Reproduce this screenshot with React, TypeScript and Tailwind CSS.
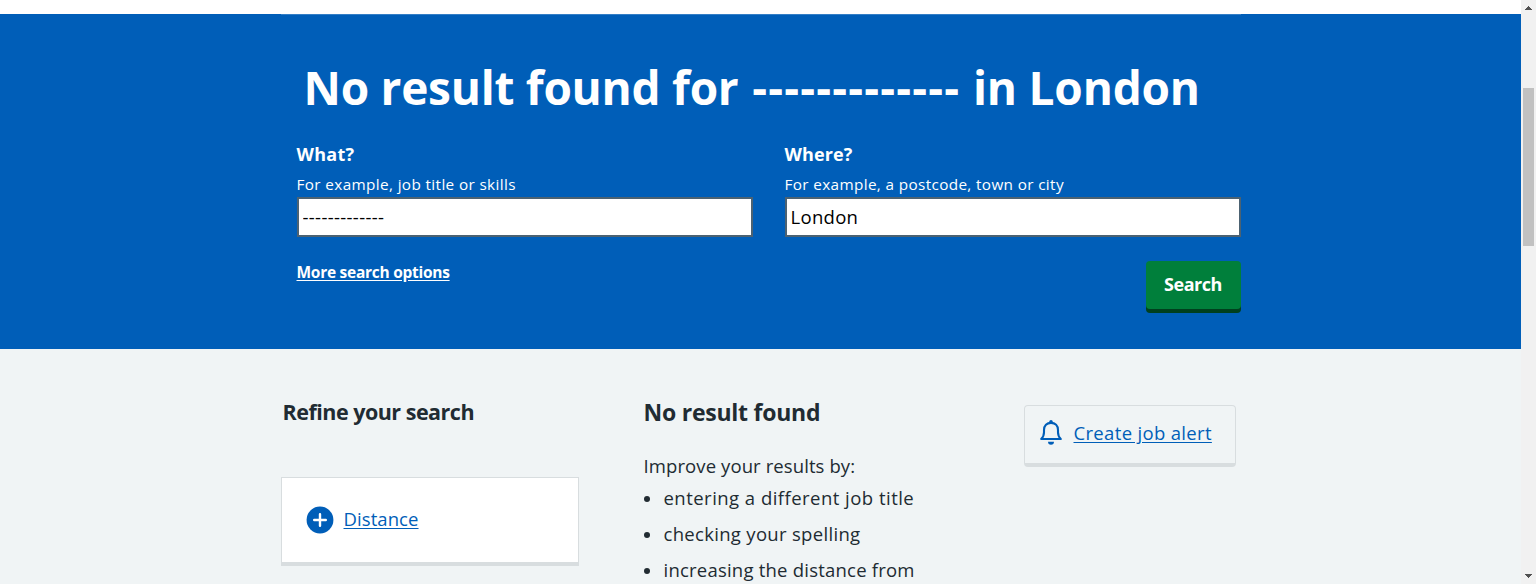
import React from "react";

function Field({ label, hint, value, labelClass, hintClass, valueClass }: {
  label: string;
  hint: string;
  value: string;
  labelClass: string;
  hintClass: string;
  valueClass: string;
}) {
  return (
    <label className="flex w-[456px] flex-col">
      <span className={`text-lg leading-7 font-bold ${labelClass}`}>{label}</span>
      <span className={`mt-1 mb-px text-[15.3px] leading-6 ${hintClass}`}>{hint}</span>
      <input
        type="text"
        defaultValue={value}
        className={`h-10 w-full border-2 border-[#4c6272] bg-white px-1 pb-0.5 text-[18.5px] text-black outline-none ${valueClass}`}
      />
    </label>
  );
}

function BellIcon() {
  return (
    <svg className="h-[26px] w-6 shrink-0" viewBox="0 0 24 26" fill="none">
      <path
        d="M2.2 20 C4.6 17.8 5 16 5 13.2 V11 C5 6.6 7.8 3.9 12 3.9 C16.2 3.9 19 6.6 19 11 V13.2 C19 16 19.4 17.8 21.8 20 Z"
        stroke="#005eb8"
        strokeWidth="2.1"
        strokeLinejoin="round"
      />
      <path d="M10.3 3.8 V2.6 A1.7 1.7 0 0 1 13.7 2.6 V3.8 Z" fill="#005eb8" />
      <path d="M9 22.8 H15 A3 2.9 0 0 1 9 22.8 Z" fill="#005eb8" />
    </svg>
  );
}

function PlusIcon() {
  return (
    <svg className="h-7 w-7 shrink-0" viewBox="0 0 28 28">
      <circle cx="14" cy="14" r="13.4" fill="#005eb8" />
      <path d="M14 8.2 V19.8 M8.2 14 H19.8" stroke="#fff" strokeWidth="2.4" strokeLinecap="round" />
    </svg>
  );
}

function Scrollbar() {
  return (
    <div className="flex h-full w-[15px] shrink-0 flex-col items-center bg-[#f1f1f1]">
      <svg className="mt-1.5 h-1 w-[7px]" viewBox="0 0 7 4" shapeRendering="crispEdges">
        <path d="M3 0h1v1h1v1h1v1h1v1H0V3h1V2h1V1h1z" fill="#505050" />
      </svg>
      <div className="mt-[78px] h-[158px] w-[11px] bg-[#c1c1c1]" />
      <svg className="mt-auto mb-1.5 h-1 w-[7px]" viewBox="0 0 7 4" shapeRendering="crispEdges">
        <path d="M0 0h7v1H6v1H5v1H4v1H3V3H2V2H1V1H0z" fill="#505050" />
      </svg>
    </div>
  );
}

const tips = [
  { text: "entering a different job title", spacing: "tracking-[0.47px]" },
  { text: "checking your spelling", spacing: "tracking-[0.31px]" },
  { text: "increasing the distance from", spacing: "tracking-[0.22px]" },
];

export default function App() {
  return (
    <div className="flex h-[584px] w-full overflow-hidden bg-white font-['Open_Sans',sans-serif] whitespace-nowrap text-[#212b32]">
      <div className="flex min-w-0 flex-1 flex-col bg-[#f0f4f5]">
        <div className="h-3.5 shrink-0 bg-white" />

        <section className="h-[335px] shrink-0 bg-[#005eb8] text-white">
          <div className="mx-auto w-[960px]">
            <div className="h-px bg-[#337ec6]" />
            <h1 className="mt-[42px] pl-[23px] text-[46px] leading-[60px] font-bold tracking-[-0.26px]">
              No result found for <span className="ml-0.5 tracking-[1.2px]">-------------</span>{" "}
              <span className="ml-px tracking-[-0.2px]">in London</span>
            </h1>
            <form className="mt-[23px] pl-4" onSubmit={(e) => e.preventDefault()}>
              <div className="flex gap-8">
                <Field
                  label="What?"
                  hint="For example, job title or skills"
                  value="-------------"
                  labelClass="tracking-[0.3px]"
                  hintClass="tracking-[0.37px]"
                  valueClass="tracking-[0.34px]"
                />
                <Field
                  label="Where?"
                  hint="For example, a postcode, town or city"
                  value="London"
                  labelClass="tracking-[0.1px]"
                  hintClass="tracking-[0.36px]"
                  valueClass="tracking-[0.3px]"
                />
              </div>
              <div className="mt-[23px] flex items-start justify-between">
                <a href="#" className="text-[15.5px] leading-6 font-bold tracking-[-0.27px] underline underline-offset-2">
                  More search options
                </a>
                <button
                  type="submit"
                  className="mt-px h-12 w-[95px] rounded bg-[#007f3b] pb-0.5 text-lg leading-7 font-bold tracking-[-0.45px] shadow-[0_4px_0_#00401e]"
                >
                  Search
                </button>
              </div>
            </form>
          </div>
        </section>

        <main className="mx-auto flex w-[960px] items-start">
          <aside className="w-[298px] pt-12">
            <h2 className="pl-0.5 text-[21.5px] leading-[30px] font-bold tracking-[-0.5px]">Refine your search</h2>
            <div className="mt-[50px] flex h-[89px] items-center border border-b-4 border-[#d8dddf] bg-white pl-6">
              <PlusIcon />
              <a href="#" className="mb-0.5 ml-2.5 text-[18.5px] leading-7 tracking-[0.08px] text-[#005eb8] underline underline-offset-2">
                Distance
              </a>
            </div>
          </aside>

          <div className="ml-16 w-[300px] pt-[47px]">
            <h2 className="pl-px text-[23px] leading-8 font-bold tracking-[-0.24px]">No result found</h2>
            <p className="mt-6 pl-px text-[18.5px] leading-7 tracking-[0.1px]">Improve your results by:</p>
            <ul className="mt-1 flex flex-col gap-2">
              {tips.map((tip) => (
                <li key={tip.text} className="flex items-center text-[18.5px] leading-7">
                  <span className="mt-0.5 mr-3.5 ml-px h-1.5 w-1.5 rounded-full bg-[#212b32]" />
                  <span className={tip.spacing}>{tip.text}</span>
                </li>
              ))}
            </ul>
          </div>

          <div className="mt-14 ml-[81px] flex h-[62px] w-[212px] items-start rounded border border-b-4 border-[#d8dddf] pt-[13px] pl-3.5">
            <BellIcon />
            <a href="#" className="ml-[11px] text-[18.5px] leading-7 tracking-[0.33px] text-[#005eb8] underline underline-offset-2">
              Create job alert
            </a>
          </div>
        </main>
      </div>
      <Scrollbar />
    </div>
  );
}
